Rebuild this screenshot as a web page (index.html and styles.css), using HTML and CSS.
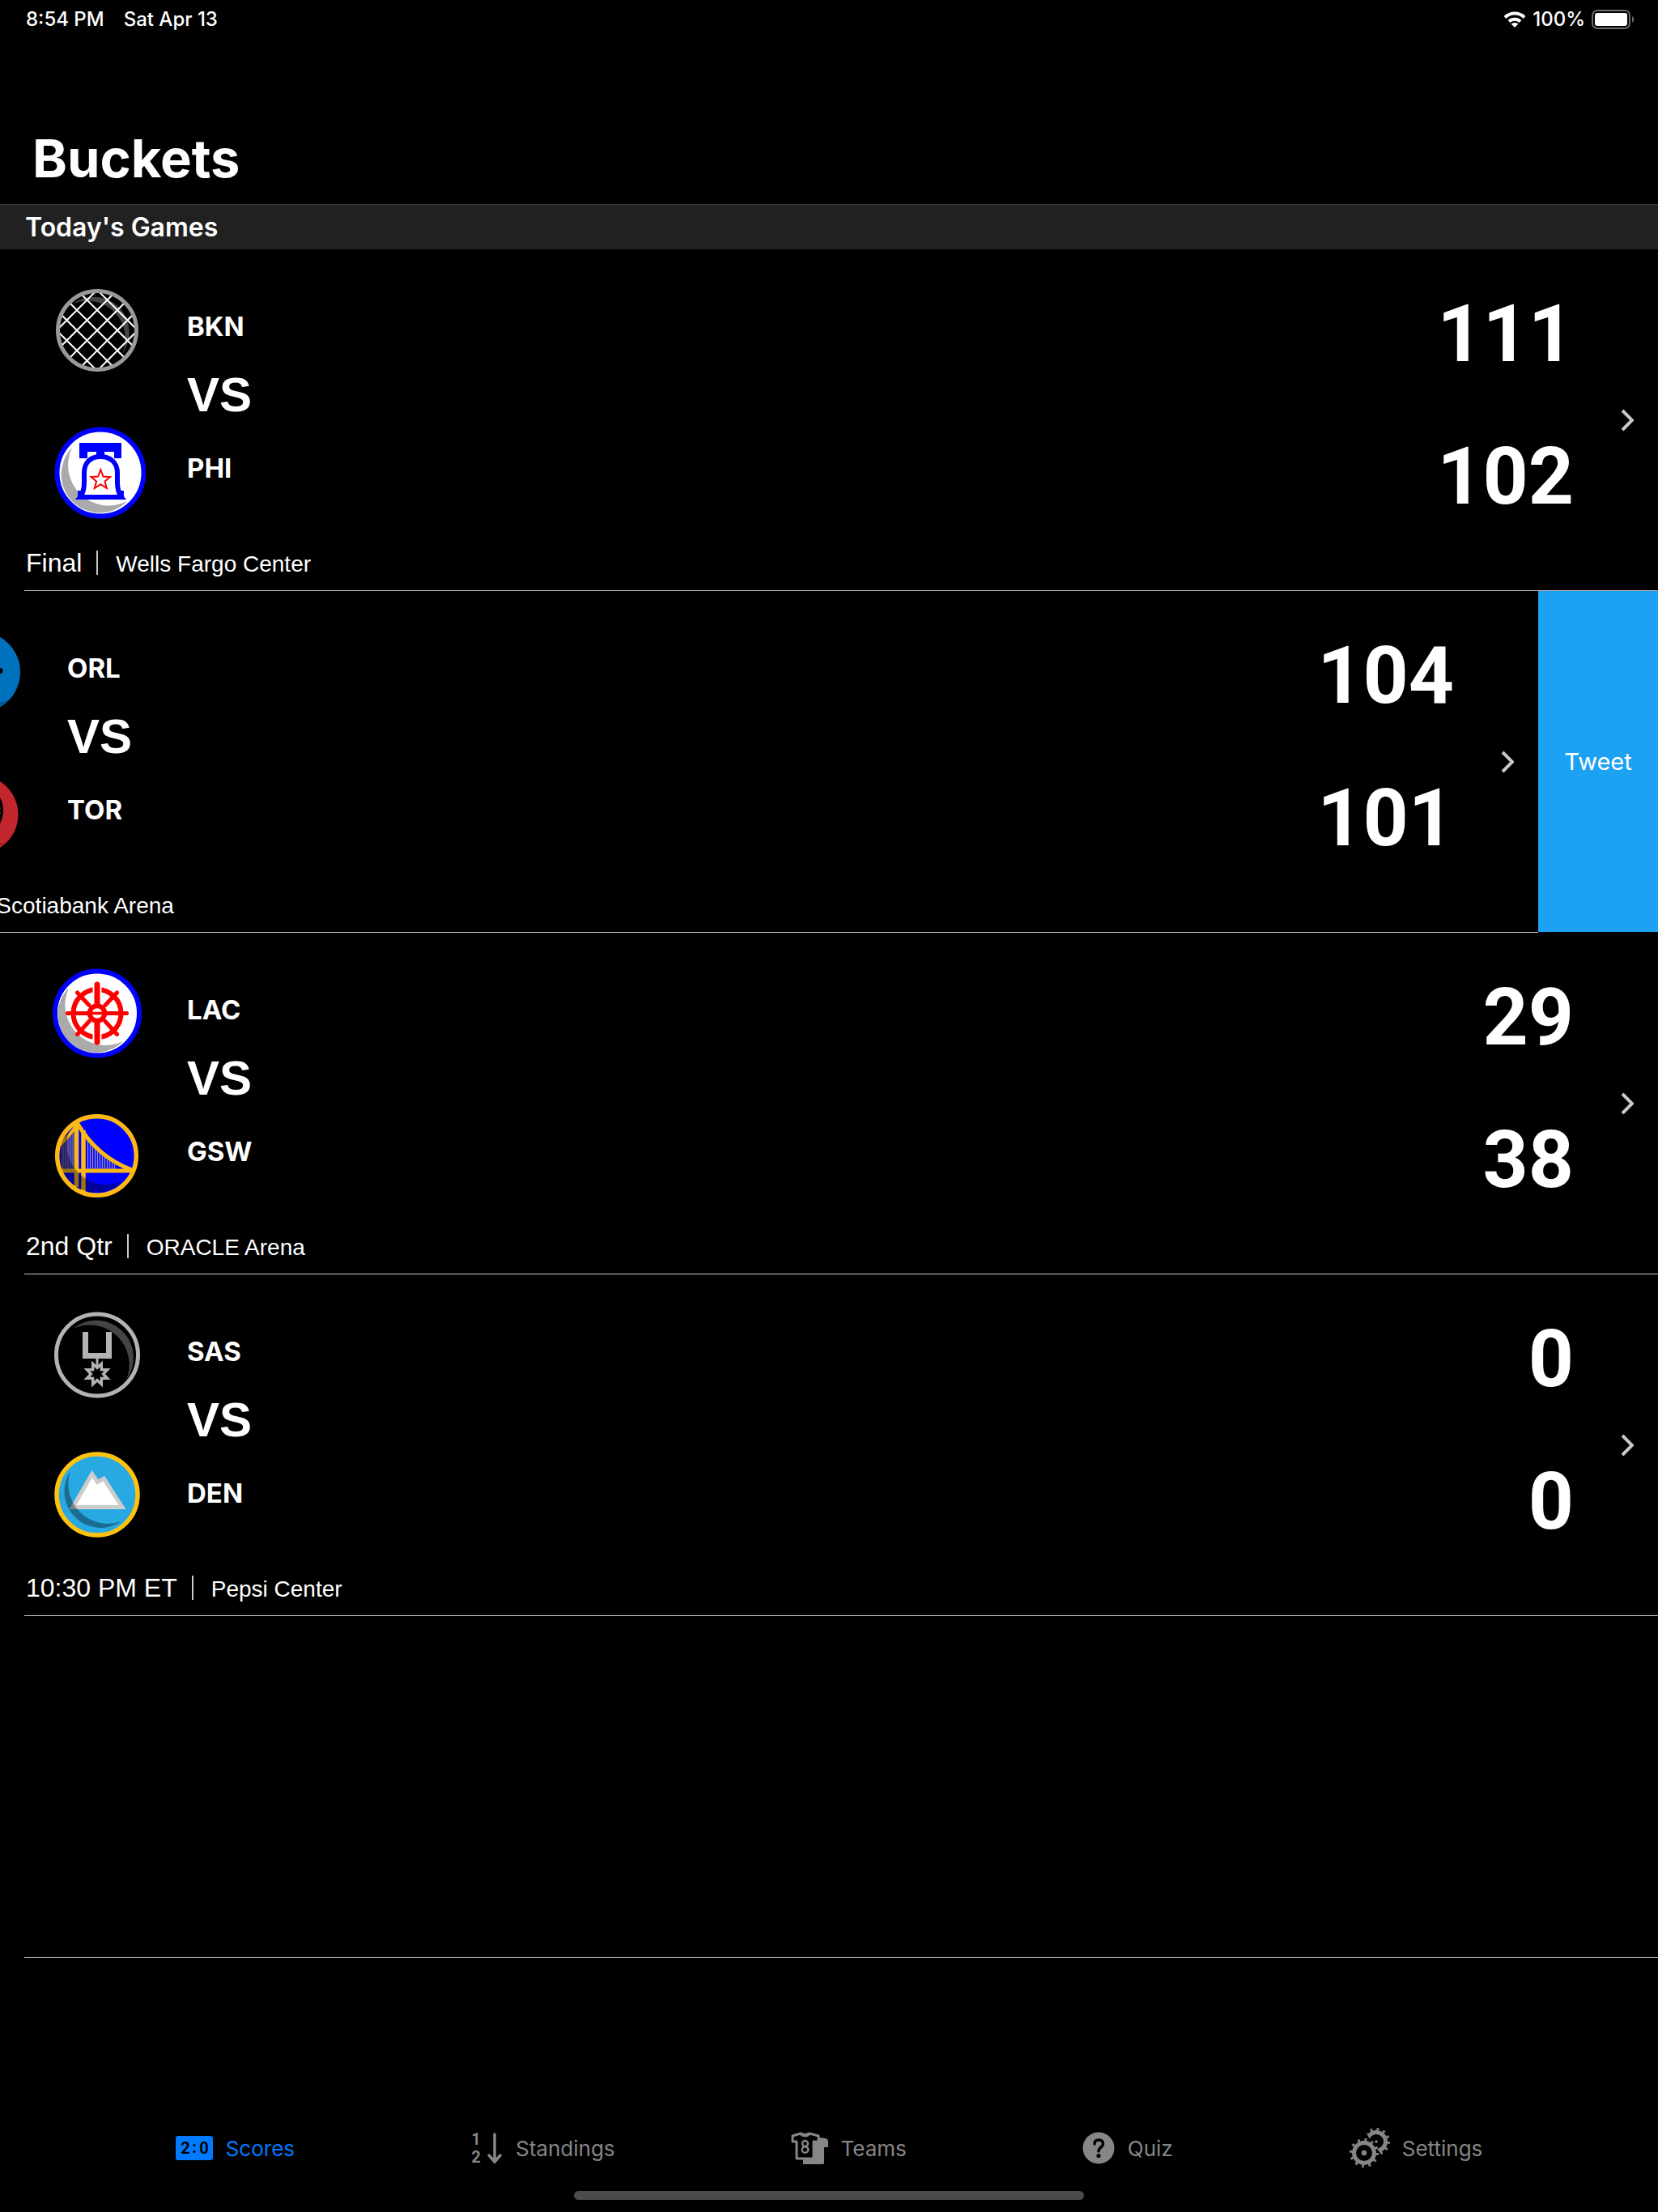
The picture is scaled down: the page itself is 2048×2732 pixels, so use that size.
FILE: index.html
```html
<!DOCTYPE html>
<html lang="en">
<head>
<meta charset="utf-8">
<meta name="viewport" content="width=device-width, initial-scale=1">
<title>Buckets</title>
<link rel="stylesheet" href="styles.css">
</head>
<body>
<div class="app">
  <div class="status-bar">
    <div class="status-group status-time"><span>8:54 PM</span><span>Sat Apr 13</span></div>
    <div class="status-group">
      <svg class="wifi" viewBox="0 0 28 20" aria-hidden="true">
        <path d="M2 7.500A17 17 0 0 1 26 7.500" fill="none" stroke="#fff" stroke-width="4"/>
        <path d="M7 12.500A10 10 0 0 1 21 12.500" fill="none" stroke="#fff" stroke-width="4"/>
        <path d="M14 20L9.600 15.600A6.500 6.500 0 0 1 18.400 15.600Z" fill="#fff"/>
      </svg>
      <span>100%</span>
      <svg class="battery" viewBox="0 0 54 24" aria-hidden="true">
        <rect x="1" y="1" width="46" height="22" rx="6" fill="none" stroke="#6b6b6b" stroke-width="2"/>
        <rect x="4" y="4" width="40" height="16" rx="3" fill="#fff"/>
        <path d="M50 8a4.500 4.500 0 0 1 0 8z" fill="#6b6b6b"/>
      </svg>
    </div>
  </div>

  <header class="title-bar"><h1>Buckets</h1></header>

  <main>
    <h2 class="section-title">Today's Games</h2>

    <ul class="games">
      <li class="game">
        <a class="game-link" href="#bkn-phi">
          <span class="logos">
            <svg viewBox="0 0 120 120" aria-hidden="true">
              <clipPath id="net"><circle cx="60" cy="60" r="47"/></clipPath>
              <path d="M30 27A44 44 0 0 1 91 89A47 47 0 0 0 30 27Z" fill="#444"/>
              <path clip-path="url(#net)" d="M0 0L120 120M-25 0L95 120M25 0L145 120M-50 0L70 120M50 0L170 120M120 0L0 120M95 0L-25 120M145 0L25 120M70 0L-50 120M170 0L50 120" stroke="#fff" stroke-width="2"/>
              <circle cx="60" cy="60" r="48.500" fill="none" stroke="#999" stroke-width="5"/>
            </svg>
            <svg viewBox="0 0 120 120" aria-hidden="true">
              <circle cx="64" cy="60" r="53.500" fill="#fff" stroke="#00f" stroke-width="6"/>
              <path d="M29 29A47 47 0 0 0 97 95A50 50 0 0 1 29 29Z" fill="#aaa"/>
              <path d="M38 23H90V42H81V34H69V40H59V34H48V42H38Z" fill="#00f"/>
              <path d="M39 90C45 82 44 72 44 60C44 47 52 40 64 40C76 40 85 47 85 60C85 72 84 82 90 90Z" fill="#fff" stroke="#00f" stroke-width="6"/>
              <path d="M36 82H41V88H88V82H93V93H36Z" fill="#00f"/>
              <path d="M64.300 56L67.500 64.500L76 65L69.500 70.500L71.800 79L64.300 74.200L56.800 79L59.100 70.500L52.600 65L61.100 64.500Z" fill="#fff" stroke="#f00" stroke-width="2"/>
            </svg>
          </span>
          <span class="names"><span class="team">BKN</span><span class="versus">VS</span><span class="team">PHI</span></span>
          <span class="scores"><span>111</span><span>102</span></span>
          <svg class="chevron" viewBox="0 0 16 28" aria-hidden="true"><path d="M2 2L14 14L2 26"/></svg>
          <span class="details"><span class="state">Final</span><span class="venue">Wells Fargo Center</span></span>
        </a>
      </li>

      <li class="game swiped">
        <a class="game-link" href="#orl-tor">
          <span class="logos">
            <svg viewBox="0 0 120 120" aria-hidden="true">
              <circle cx="63" cy="60" r="50" fill="#0071bc"/>
              <path d="M29 29A47 47 0 0 0 96 95A50 50 0 0 1 29 29Z" fill="#004f84"/>
              <path d="M60 28L67 50L88 55A3.500 3.500 0 0 1 88 62L70 66L60 90L51 66L30 58L52 50Z" fill="#000"/>
            </svg>
            <svg viewBox="0 0 120 120" aria-hidden="true">
              <circle cx="62" cy="60" r="48.500" fill="#c1272d"/>
              <path d="M29 29A46 46 0 0 0 94 94A49 49 0 0 1 29 29Z" fill="#871b1f"/>
              <circle cx="58" cy="55" r="32.200" fill="#999" stroke="#000" stroke-width="3.500"/>
              <path d="M26 55H90M58 23V87M36 32Q52 55 36 78M80 32Q64 55 80 78" fill="none" stroke="#000" stroke-width="3"/>
            </svg>
          </span>
          <span class="names"><span class="team">ORL</span><span class="versus">VS</span><span class="team">TOR</span></span>
          <span class="scores"><span>104</span><span>101</span></span>
          <svg class="chevron" viewBox="0 0 16 28" aria-hidden="true"><path d="M2 2L14 14L2 26"/></svg>
          <span class="details"><span class="state">Final</span><span class="venue">Scotiabank Arena</span></span>
        </a>
        <button class="tweet" type="button">Tweet</button>
      </li>

      <li class="game">
        <a class="game-link" href="#lac-gsw">
          <span class="logos">
            <svg viewBox="0 0 120 120" aria-hidden="true">
              <circle cx="60" cy="59.500" r="52" fill="#fff" stroke="#00f" stroke-width="6"/>
              <path d="M25 28A46 46 0 0 0 92 94A50 50 0 0 1 25 28Z" fill="#aaa"/>
              <circle cx="60" cy="59.500" r="29.500" fill="#fff" stroke="#f00" stroke-width="6"/>
              <path d="M60 24V95" stroke="#fff" stroke-width="11"/>
              <g fill="none" stroke="#f00" stroke-linecap="round">
                <path d="M60 24V95" stroke-width="7"/>
                <path d="M23.500 59.500H96.500" stroke-width="5"/>
                <path d="M50 49.500L35.500 34M70 49.500L84.500 34M50 69.500L35.500 85.500M70 69.500L84.500 85.500" stroke-width="5"/>
              </g>
              <circle cx="60" cy="59.500" r="9.200" fill="#fff" stroke="#f00" stroke-width="6"/>
              <path d="M52 59.500H68" stroke="#f00" stroke-width="3.500"/>
            </svg>
            <svg viewBox="0 0 120 120" aria-hidden="true">
              <circle cx="59.500" cy="59.500" r="49" fill="#00f"/>
              <path d="M15 43Q28 34 33 24V76H15Z" fill="#3a35b0"/>
              <path d="M18 42V76M21 39V76M24 36V76M27 32V76M30 28V76" stroke="#77708c"/>
              <path d="M48.500 40V76M51.500 43V76M54.500 47V76M57.500 50V76M60.500 53V76M63.500 56V76M66.500 59V76M69.500 61V76M72.500 64V76M75.500 66V76M78.500 68V76M81.500 70V76" stroke="#8f87b5" stroke-width="1.400"/>
              <g fill="none" stroke="#fcb914">
                <path d="M34.500 19V98M43 28V103" stroke-width="5.500"/>
                <path d="M13 78H104" stroke-width="5"/>
                <path d="M36 20Q60 61 103 77" stroke-width="5"/>
                <path d="M35 21Q28 32 14 46" stroke-width="4"/>
              </g>
              <path d="M26 28A45 45 0 0 0 91 91A49 49 0 0 1 26 28Z" fill="#000" fill-opacity=".38"/>
              <circle cx="59.500" cy="59.500" r="48.800" fill="none" stroke="#fcb914" stroke-width="5.500"/>
            </svg>
          </span>
          <span class="names"><span class="team">LAC</span><span class="versus">VS</span><span class="team">GSW</span></span>
          <span class="scores"><span>29</span><span>38</span></span>
          <svg class="chevron" viewBox="0 0 16 28" aria-hidden="true"><path d="M2 2L14 14L2 26"/></svg>
          <span class="details"><span class="state">2nd Qtr</span><span class="venue">ORACLE Arena</span></span>
        </a>
      </li>

      <li class="game">
        <a class="game-link" href="#sas-den">
          <span class="logos">
            <svg viewBox="0 0 120 120" aria-hidden="true">
              <path d="M30 27A46 46 0 0 1 96 90A49 49 0 0 0 30 27Z" fill="#444"/>
              <circle cx="60" cy="59.500" r="50.500" fill="none" stroke="#b3b3b3" stroke-width="5"/>
              <path d="M42 31H49V57H71V31H78V64H61.500V74H58.500V64H42Z" fill="#b3b3b3"/>
              <path transform="translate(60 83)" d="M10 0L16.600 6.900L7.100 7.100L6.900 16.600L0 10L-6.900 16.600L-7.100 7.100L-16.600 6.900L-10 0L-16.600 -6.900L-7.100 -7.100L-6.900 -16.600L0 -10L6.900 -16.600L7.100 -7.100L16.600 -6.900Z" fill="#b3b3b3"/>
              <path transform="translate(60 83) scale(.52)" d="M10 0L16.600 6.900L7.100 7.100L6.900 16.600L0 10L-6.900 16.600L-7.100 7.100L-16.600 6.900L-10 0L-16.600 -6.900L-7.100 -7.100L-6.900 -16.600L0 -10L6.900 -16.600L7.100 -7.100L16.600 -6.900Z" fill="#000"/>
            </svg>
            <svg viewBox="0 0 120 120" aria-hidden="true">
              <circle cx="60" cy="56" r="50" fill="#29a9e1" stroke="#ffc20e" stroke-width="5.500"/>
              <path d="M53.700 30.500L60.500 40.500L68.300 36L91 71.500H30Z" fill="#fff" stroke="#ccc" stroke-width="5"/>
              <path d="M27 27A45 45 0 0 0 90 89A49 49 0 0 1 27 27Z" fill="#000" fill-opacity=".36"/>
            </svg>
          </span>
          <span class="names"><span class="team">SAS</span><span class="versus">VS</span><span class="team">DEN</span></span>
          <span class="scores"><span>0</span><span>0</span></span>
          <svg class="chevron" viewBox="0 0 16 28" aria-hidden="true"><path d="M2 2L14 14L2 26"/></svg>
          <span class="details"><span class="state">10:30 PM ET</span><span class="venue">Pepsi Center</span></span>
        </a>
      </li>

      <li class="game game-empty" aria-hidden="true"></li>
    </ul>
  </main>

  <nav class="tabs" aria-label="Sections">
    <a class="tab active" href="#scores" aria-current="page">
      <svg width="46" height="30" viewBox="0 0 46 30" aria-hidden="true">
        <rect width="46" height="30" rx="3" fill="currentColor"/>
        <g class="board-digits"><text x="12" y="22">2</text><text x="23" y="21">:</text><text x="35" y="22">0</text></g>
      </svg>
      <span>Scores</span>
    </a>
    <a class="tab" href="#standings">
      <svg width="40" height="40" viewBox="0 0 40 40" aria-hidden="true">
        <g class="rank-digits"><text x="7" y="16">1</text><text x="7" y="38">2</text></g>
        <path d="M30 3V36M23 29L30 37L37 29" fill="none" stroke="currentColor" stroke-width="3.500" stroke-linecap="round"/>
      </svg>
      <span>Standings</span>
    </a>
    <a class="tab" href="#teams">
      <svg width="46" height="40" viewBox="0 0 46 40" aria-hidden="true">
        <path d="M28 6L43 8Q46 9 46 12V19H41V39Q41 40 39 40H15V34H28Z" fill="currentColor"/>
        <path d="M2 5L12 2Q17.500 5 23 2L34 5V12H28V33H7V12H2Z" fill="#000" stroke="currentColor" stroke-width="3" stroke-linejoin="round"/>
        <path d="M12 2Q17.500 7 23 2" fill="none" stroke="currentColor" stroke-width="4"/>
        <circle cx="17.500" cy="14.500" r="3.500" fill="none" stroke="currentColor" stroke-width="2.500"/>
        <circle cx="17.500" cy="22" r="3.800" fill="none" stroke="currentColor" stroke-width="2.500"/>
      </svg>
      <span>Teams</span>
    </a>
    <a class="tab" href="#quiz">
      <svg width="40" height="40" viewBox="0 0 40 40" aria-hidden="true">
        <circle cx="20" cy="20" r="19.500" fill="currentColor"/>
        <path d="M15 15Q15 10 20 10Q25.500 10 25.500 15C25.500 19 20 19 20 24" fill="none" stroke="#000" stroke-width="3.500" stroke-linecap="round"/>
        <circle cx="20" cy="29.500" r="2.600" fill="#000"/>
      </svg>
      <span>Quiz</span>
    </a>
    <a class="tab" href="#settings">
      <svg width="50" height="50" viewBox="0 0 50 50" aria-hidden="true">
        <circle cx="34" cy="17" r="11.500" fill="none" stroke="currentColor" stroke-width="5"/>
        <circle cx="34" cy="17" r="15" fill="none" stroke="currentColor" stroke-width="4" stroke-dasharray="2.800 5.054"/>
        <path d="M8 0H18L26 14L38 30L34 40L0 30Z" fill="#000"/>
        <circle cx="34" cy="17" r="1.800" fill="currentColor"/>
        <circle cx="19" cy="31" r="15.500" fill="#000"/>
        <circle cx="19" cy="31" r="12.500" fill="none" stroke="currentColor" stroke-width="5"/>
        <circle cx="19" cy="31" r="16" fill="none" stroke="currentColor" stroke-width="4" stroke-dasharray="2.800 5.578"/>
        <circle cx="19" cy="31" r="3.300" fill="currentColor"/>
      </svg>
      <span>Settings</span>
    </a>
  </nav>
  <div class="home-indicator"></div>
</div>
</body>
</html>
```
FILE: styles.css
```css
* { box-sizing: border-box; }

body {
  margin: 0;
  background: #000;
  color: #fff;
  font-family: Inter, "Liberation Sans", sans-serif;
}

a { color: inherit; text-decoration: none; }

.app {
  display: flex;
  flex-direction: column;
  min-height: 100vh;
  overflow: hidden;
}

/* Status bar */
.status-bar {
  display: flex;
  justify-content: space-between;
  height: 48px;
  padding: 0 28px 0 32px;
  font-size: 24px;
  font-weight: 500;
  line-height: 48px;
}
.status-group { display: flex; align-items: center; gap: 8px; }
.status-time { gap: 24px; }
.wifi { width: 28px; height: 20px; }
.battery { width: 54px; height: 24px; }

/* Title */
.title-bar {
  padding: 108px 40px 16px;
  border-bottom: 1px solid #3d3d3d;
}
.title-bar h1 {
  margin: 0;
  font-size: 65px;
  font-weight: 700;
  line-height: 80px;
}
.section-title {
  margin: 0;
  padding: 0 31px;
  background: #212121;
  font-size: 32px;
  font-weight: 600;
  line-height: 55px;
}

/* Games */
.games { margin: 0; padding: 0; list-style: none; }
.game { display: flex; overflow: hidden; }
.game-link,
.game-empty {
  position: relative;
  min-height: 422px;
}
.game-link {
  flex: 0 0 100%;
  display: grid;
  grid-template-columns: 231px 1fr auto 104px;
  grid-template-rows: 1fr auto;
}
.game-link::after,
.game-empty::after {
  content: "";
  position: absolute;
  right: 0;
  bottom: 0;
  left: 30px;
  height: 1px;
  background: #c8c7cc;
}
.swiped .game-link { margin-left: -148px; }

.logos,
.names,
.scores { display: flex; flex-direction: column; }

.logos { gap: 56px; padding: 40px 0 0 60px; }
.logos svg { width: 120px; height: 120px; }

.names { padding-top: 75px; }
.team { font-size: 33px; font-weight: 700; line-height: 40px; }
.versus {
  margin: 35px 0 40px;
  font-family: "Liberation Sans", sans-serif;
  font-size: 60px;
  font-weight: 700;
  line-height: 60px;
}

.scores {
  gap: 56px;
  padding-top: 45px;
  font-family: Roboto, sans-serif;
  font-size: 98px;
  font-weight: 700;
  line-height: 120px;
  text-align: right;
}

.chevron {
  grid-row: 1 / 3;
  grid-column: 4;
  align-self: center;
  justify-self: end;
  width: 16px;
  height: 28px;
  margin-right: 30px;
  fill: none;
  stroke: #c7c7cc;
  stroke-width: 4;
}

.details {
  grid-row: 2;
  grid-column: 1 / 4;
  display: flex;
  align-items: baseline;
  padding: 0 32px 18px;
  font-family: "Liberation Sans", sans-serif;
  line-height: 30px;
}
.state {
  padding-right: 18px;
  border-right: 2px solid #c8c8c8;
  font-size: 32px;
}
.venue { padding-left: 22px; font-size: 28px; }

.tweet {
  flex: 0 0 148px;
  margin: 0 0 1px;
  padding: 0;
  border: 0;
  background: #1da1f2;
  color: #fff;
  font: 400 29px Inter, sans-serif;
}

/* Tab bar */
.tabs {
  display: flex;
  justify-content: center;
  gap: 217px;
  height: 70px;
  margin-top: auto;
  color: #868686;
  font-size: 26px;
}
.tab { display: flex; align-items: center; gap: 16px; }
.tab svg { overflow: visible; }
.active { color: #007aff; }
.board-digits,
.rank-digits {
  font-family: Roboto, sans-serif;
  font-weight: 700;
  text-anchor: middle;
}
.board-digits { fill: #000; font-size: 20px; }
.rank-digits { fill: currentColor; font-size: 20px; }

.home-indicator {
  width: 630px;
  max-width: 60%;
  height: 11px;
  margin: 18px auto 15px;
  border-radius: 6px;
  background: #4b4b4b;
}
```
